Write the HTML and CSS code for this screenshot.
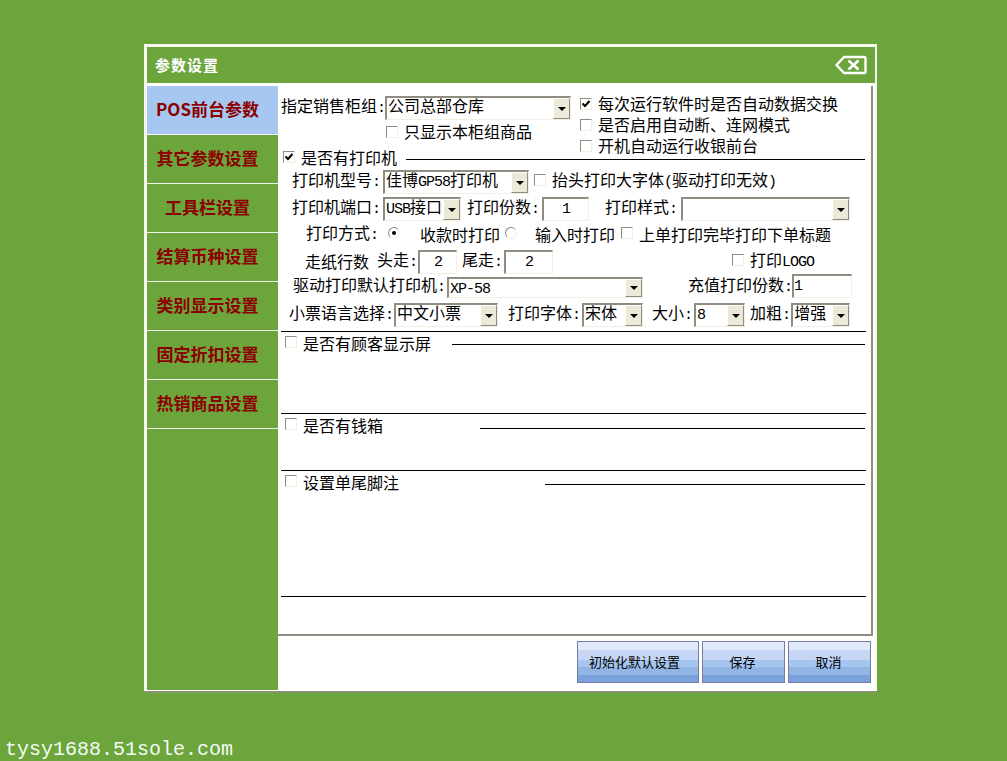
FILE: index.html
```html
<!DOCTYPE html>
<html lang="zh-CN">
<head>
    <meta charset="UTF-8">
    <title>参数设置</title>
    <link rel="stylesheet" href="styles.css">
</head>
<body>
    <div class="window">
        <div class="title-bar">
            <span class="title-text">参数设置</span>
            <svg class="close-icon" width="32" height="20" viewBox="0 0 32 20" fill="none" stroke="#fff">
                <path d="M1.5 10 L9 2 H29 Q30.5 2 30.5 3.5 V16.5 Q30.5 18 29 18 H9 Z" stroke-width="2.4" stroke-linejoin="round"/>
                <path d="M13.5 5.5 L23.5 14.5 M23.5 5.5 L13.5 14.5" stroke-width="2.6"/>
            </svg>
        </div>
        <div class="window-body">
            <div class="sidebar">
                <div class="side-item active">POS前台参数</div>
                <div class="side-item">其它参数设置</div>
                <div class="side-item">工具栏设置</div>
                <div class="side-item">结算币种设置</div>
                <div class="side-item">类别显示设置</div>
                <div class="side-item">固定折扣设置</div>
                <div class="side-item">热销商品设置</div>
            </div>
            <div class="main">
                <div class="panel">
                    <div class="top-block">
                        <div class="top-left">
                            <div class="row">
                                <span>指定销售柜组<span class="lat">:</span></span>
                                <div class="combo w-186"><span class="combo-text">公司总部仓库</span><span class="combo-btn"></span></div>
                            </div>
                            <div class="show-own">
                                <span class="check"></span><span>只显示本柜组商品</span>
                            </div>
                        </div>
                        <div class="top-right">
                            <div class="opt">
                                <span class="check"><svg width="10" height="10" viewBox="0 0 10 10"><path d="M1.5 4.5 L4 7 L8.5 2" fill="none" stroke="#000" stroke-width="2"/></svg></span><span>每次运行软件时是否自动数据交换</span>
                            </div>
                            <div class="opt">
                                <span class="check"></span><span>是否启用自动断、连网模式</span>
                            </div>
                            <div class="opt">
                                <span class="check"></span><span>开机自动运行收银前台</span>
                            </div>
                        </div>
                    </div>

                    <div class="section printer">
                        <div class="sec-head head-printer">
                            <span class="check"><svg width="10" height="10" viewBox="0 0 10 10"><path d="M1.5 4.5 L4 7 L8.5 2" fill="none" stroke="#000" stroke-width="2"/></svg></span><span>是否有打印机</span><span class="sec-line"></span>
                        </div>
                        <div class="row pl-11">
                            <span>打印机型号<span class="lat">:</span></span>
                            <div class="combo w-146 ml-3"><span class="combo-text">佳博<span class="lat">GP58</span>打印机</span><span class="combo-btn"></span></div>
                            <span class="check ml-5"></span><span class="ml-6">抬头打印大字体<span class="lat">(</span>驱动打印无效<span class="lat">)</span></span>
                        </div>
                        <div class="row pl-11">
                            <span>打印机端口<span class="lat">:</span></span>
                            <div class="combo w-78 ml-3"><span class="combo-text"><span class="lat">USB</span>接口</span><span class="combo-btn"></span></div>
                            <span class="ml-6">打印份数<span class="lat">:</span></span>
                            <div class="field w-47 ml-3"><span class="lat">1</span></div>
                            <span class="ml-16">打印样式<span class="lat">:</span></span>
                            <div class="combo w-169 ml-4"><span class="combo-text"></span><span class="combo-btn"></span></div>
                        </div>
                        <div class="row short pl-25">
                            <span>打印方式<span class="lat">:</span></span>
                            <span class="radio on ml-10"></span><span class="ml-20">收款时打印</span>
                            <span class="radio ml-5"></span><span class="ml-18">输入时打印</span>
                            <span class="check ml-6"></span><span class="ml-6">上单打印完毕打印下单标题</span>
                        </div>
                        <div class="row pl-24">
                            <span>走纸行数</span>
                            <span class="ml-8">头走<span class="lat">:</span></span>
                            <div class="field w-39 ml-1"><span class="lat">2</span></div>
                            <span class="ml-5">尾走<span class="lat">:</span></span>
                            <div class="field w-49 ml-2"><span class="lat">2</span></div>
                            <span class="check ml-179"></span><span class="ml-6">打印<span class="lat">LOGO</span></span>
                        </div>
                        <div class="row pl-12 flush">
                            <span>驱动打印默认打印机<span class="lat">:</span></span>
                            <div class="combo thin w-196 ml-2"><span class="combo-text"><span class="lat">XP-58</span></span><span class="combo-btn"></span></div>
                            <span class="ml-45">充值打印份数<span class="lat">:</span></span>
                            <div class="field left w-60"><span class="lat">1</span></div>
                        </div>
                        <div class="row pl-8 spaced">
                            <span>小票语言选择<span class="lat">:</span></span>
                            <div class="combo w-104 ml-1"><span class="combo-text">中文小票</span><span class="combo-btn"></span></div>
                            <span class="ml-10">打印字体<span class="lat">:</span></span>
                            <div class="combo w-61 ml-2"><span class="combo-text">宋体</span><span class="combo-btn"></span></div>
                            <span class="ml-9">大小<span class="lat">:</span></span>
                            <div class="combo w-51 ml-2"><span class="combo-text"><span class="lat">8</span></span><span class="combo-btn"></span></div>
                            <span class="ml-5">加粗<span class="lat">:</span></span>
                            <div class="combo w-59 ml-1"><span class="combo-text">增强</span><span class="combo-btn"></span></div>
                        </div>
                    </div>

                    <div class="section customer">
                        <div class="sec-head head-customer">
                            <span class="check"></span><span>是否有顾客显示屏</span><span class="sec-line"></span>
                        </div>
                    </div>
                    <div class="section cash">
                        <div class="sec-head head-cash">
                            <span class="check"></span><span>是否有钱箱</span><span class="sec-line"></span>
                        </div>
                    </div>
                    <div class="section tail">
                        <div class="sec-head head-tail">
                            <span class="check"></span><span>设置单尾脚注</span><span class="sec-line"></span>
                        </div>
                    </div>
                </div>
                <div class="footer">
                    <button class="btn wide">初始化默认设置</button>
                    <button class="btn">保存</button>
                    <button class="btn">取消</button>
                </div>
            </div>
        </div>
    </div>
    <div class="watermark">tysy1688.51sole.com</div>
</body>
</html>
```

FILE: styles.css
```css
* {
    margin: 0;
    padding: 0;
    box-sizing: border-box;
}

body {
    width: 1007px;
    height: 761px;
    overflow: hidden;
    background-color: #6ba53c;
    display: flex;
    flex-direction: column;
    align-items: flex-start;
    padding-top: 44px;
    font-family: "Noto Sans CJK SC", "Liberation Sans", sans-serif;
    font-size: 16px;
    line-height: 20px;
    color: #000;
}

/* latin in the old UI font is half a CJK cell wide: 15px mono is 9px, less 1px */
.lat {
    font-family: "Liberation Mono", monospace;
    font-size: 15px;
    letter-spacing: -1px;
}

.window {
    width: 733px;
    height: 647px;
    margin-left: 144px;
    background-color: #fff;
    border: 3px solid #f8f8f0;
    border-right-width: 2px;
    border-bottom: 1px solid #fff;
    box-shadow: 0 2px 0 -0.5px #8f8d80;
    display: flex;
    flex-direction: column;
}

.title-bar {
    height: 36px;
    flex: none;
    background-color: #6ba53c;
    display: flex;
    align-items: center;
    justify-content: space-between;
    padding: 0 8px 0 8px;
}

.title-text {
    color: #fff;
    font-weight: bold;
    font-size: 15px;
    letter-spacing: 1px;
}

.window-body {
    flex: 1;
    display: flex;
    margin-top: 3px;
    min-height: 0;
}

.sidebar {
    width: 131px;
    flex: none;
    background-color: #6ba53c;
}

.side-item {
    height: 49px;
    border-bottom: 1px solid #f0f5ea;
    display: flex;
    align-items: center;
    justify-content: center;
    padding: 0 10px 3px 0;
    color: #8b0000;
    font-weight: bold;
    font-size: 17px;
}

.side-item.active {
    background-color: #a6c8f0;
    border-bottom-color: #fff;
}

.main {
    flex: 1;
    display: flex;
    flex-direction: column;
    min-width: 0;
}

.panel {
    height: 550px;
    flex: none;
    margin-right: 2px;
    padding-left: 3px;
    border-right: 2px solid #8f8d80;
    border-bottom: 2px solid #8f8d80;
    overflow: hidden;
}

.top-block {
    display: flex;
    margin-bottom: -9px;
}

.top-left {
    width: 299px;
    padding-top: 7px;
}

.top-right {
    padding-top: 8px;
}

.opt {
    height: 21px;
    padding-bottom: 2px;
    line-height: 17px;
    display: flex;
    align-items: center;
}

.opt .check {
    margin-right: 6px;
}

.show-own {
    height: 21px;
    margin-top: 2px;
    margin-left: 105px;
    padding-bottom: 2px;
    line-height: 17px;
    display: flex;
    align-items: center;
}

.show-own .check {
    margin-right: 6px;
}

/* text sits a little above the middle of its control, as in the original */
.row {
    height: 24px;
    margin-top: 3px;
    padding-bottom: 3px;
    display: flex;
    align-items: center;
    white-space: nowrap;
}

.row.short { height: 23px; }
.row.flush { margin-top: 0; padding-bottom: 0; }
.row.spaced { margin-top: 5px; }

.head-printer + .row { margin-top: 0; }

.row .check { margin-top: -1px; }
.row.short .check,
.row.short .radio { margin-top: -3px; }

.section {
    margin-right: 5px;
    border-bottom: 1px solid #000;
}

.printer { padding-bottom: 4px; }
.customer { height: 82px; }
.cash { height: 57px; }
.tail { height: 126px; }

.sec-head {
    height: 22px;
    display: flex;
    align-items: center;
}

.sec-head .check {
    margin-top: -2px;
    margin-right: 6px;
}

.head-printer {
    padding-left: 2px;
    padding-bottom: 4px;
}

.head-printer .check { margin-top: 0; }

.head-customer, .head-cash, .head-tail { padding-left: 4px; }

.sec-line {
    flex: 1;
    height: 1px;
    background-color: #000;
    margin-right: 1px;
}

.head-printer .sec-line { margin-left: 9px; margin-top: 4px; }
.head-customer .sec-line { margin-left: 21px; margin-top: 2px; }
.head-cash .sec-line { margin-left: 97px; margin-top: 6px; }
.head-tail .sec-line { margin-left: 146px; margin-top: 4px; }

.check {
    width: 12px;
    height: 12px;
    flex: none;
    background-color: #fff;
    border: 1px solid;
    border-color: #8f8d80 #f1efe2 #f1efe2 #8f8d80;
    display: flex;
    align-items: center;
    justify-content: center;
}

.radio {
    width: 12px;
    height: 12px;
    flex: none;
    border-radius: 50%;
    border: 1px solid;
    border-color: #8f8d80 #f1efe2 #f1efe2 #8f8d80;
    position: relative;
}

.radio.on::after {
    content: "";
    position: absolute;
    left: 3px;
    top: 3px;
    width: 4px;
    height: 4px;
    border-radius: 50%;
    background-color: #000;
}

.combo {
    height: 24px;
    flex: none;
    align-self: flex-start;
    display: flex;
    background-color: #fff;
    border-top: 2px solid #8f8d80;
    border-left: 2px solid #8f8d80;
    border-right: 1px solid #f1efe2;
    border-bottom: 1px solid #f1efe2;
}

.combo.thin {
    height: 21px;
    margin-top: 3px;
}

.combo-text {
    flex: 1;
    padding-left: 1px;
    line-height: 14px;
}

.combo-btn {
    width: 17px;
    flex: none;
    background-color: #ece9d8;
    border: 1px solid;
    border-color: #fff #8f8d80 #8f8d80 #fff;
    display: flex;
    align-items: center;
    justify-content: center;
}

.combo-btn::after {
    content: "";
    border-left: 4px solid transparent;
    border-right: 4px solid transparent;
    border-top: 4px solid #000;
}

.field {
    height: 24px;
    flex: none;
    align-self: flex-start;
    background-color: #fff;
    border-top: 2px solid #8f8d80;
    border-left: 2px solid #8f8d80;
    border-right: 1px solid #f1efe2;
    border-bottom: 1px solid #f1efe2;
    text-align: center;
    line-height: 14px;
}

.field.left { text-align: left; }

.footer {
    flex: 1;
    display: flex;
    justify-content: flex-end;
    gap: 3px;
    padding: 5px 4px 0 0;
}

.btn {
    width: 83px;
    height: 42px;
    padding: 0 2px 2px 0;
    border: 1px solid #7a7aa6;
    font-family: inherit;
    font-size: 13px;
    color: #000;
    background: linear-gradient(to bottom,
        #e1eafb 0, #e1eafb 8px,
        #c6d6f4 8px, #c6d6f4 18px,
        #a4c6ef 18px, #a4c6ef 25px,
        #93b5e6 25px, #93b5e6 33px,
        #7ba2dd 33px, #7ba2dd 100%);
}

.btn.wide {
    width: 122px;
    padding-right: 7px;
}

.watermark {
    margin-top: auto;
    margin-left: 5px;
    color: #f4fbf4;
    font-family: "Liberation Mono", monospace;
    font-size: 20px;
    line-height: 22px;
}

.pl-8 { padding-left: 8px; }
.pl-11 { padding-left: 11px; }
.pl-12 { padding-left: 12px; }
.pl-24 { padding-left: 24px; }
.pl-25 { padding-left: 25px; }

.ml-1 { margin-left: 1px; }
.ml-2 { margin-left: 2px; }
.ml-3 { margin-left: 3px; }
.ml-4 { margin-left: 4px; }
.ml-5 { margin-left: 5px; }
.ml-6 { margin-left: 6px; }
.ml-8 { margin-left: 8px; }
.ml-9 { margin-left: 9px; }
.ml-10 { margin-left: 10px; }
.ml-16 { margin-left: 16px; }
.ml-18 { margin-left: 18px; }
.ml-20 { margin-left: 20px; }
.ml-45 { margin-left: 45px; }
.ml-179 { margin-left: 179px; }

.w-39 { width: 39px; }
.w-47 { width: 47px; }
.w-49 { width: 49px; }
.w-51 { width: 51px; }
.w-59 { width: 59px; }
.w-60 { width: 60px; }
.w-61 { width: 61px; }
.w-78 { width: 78px; }
.w-104 { width: 104px; }
.w-146 { width: 146px; }
.w-169 { width: 169px; }
.w-186 { width: 186px; }
.w-196 { width: 196px; }
```
